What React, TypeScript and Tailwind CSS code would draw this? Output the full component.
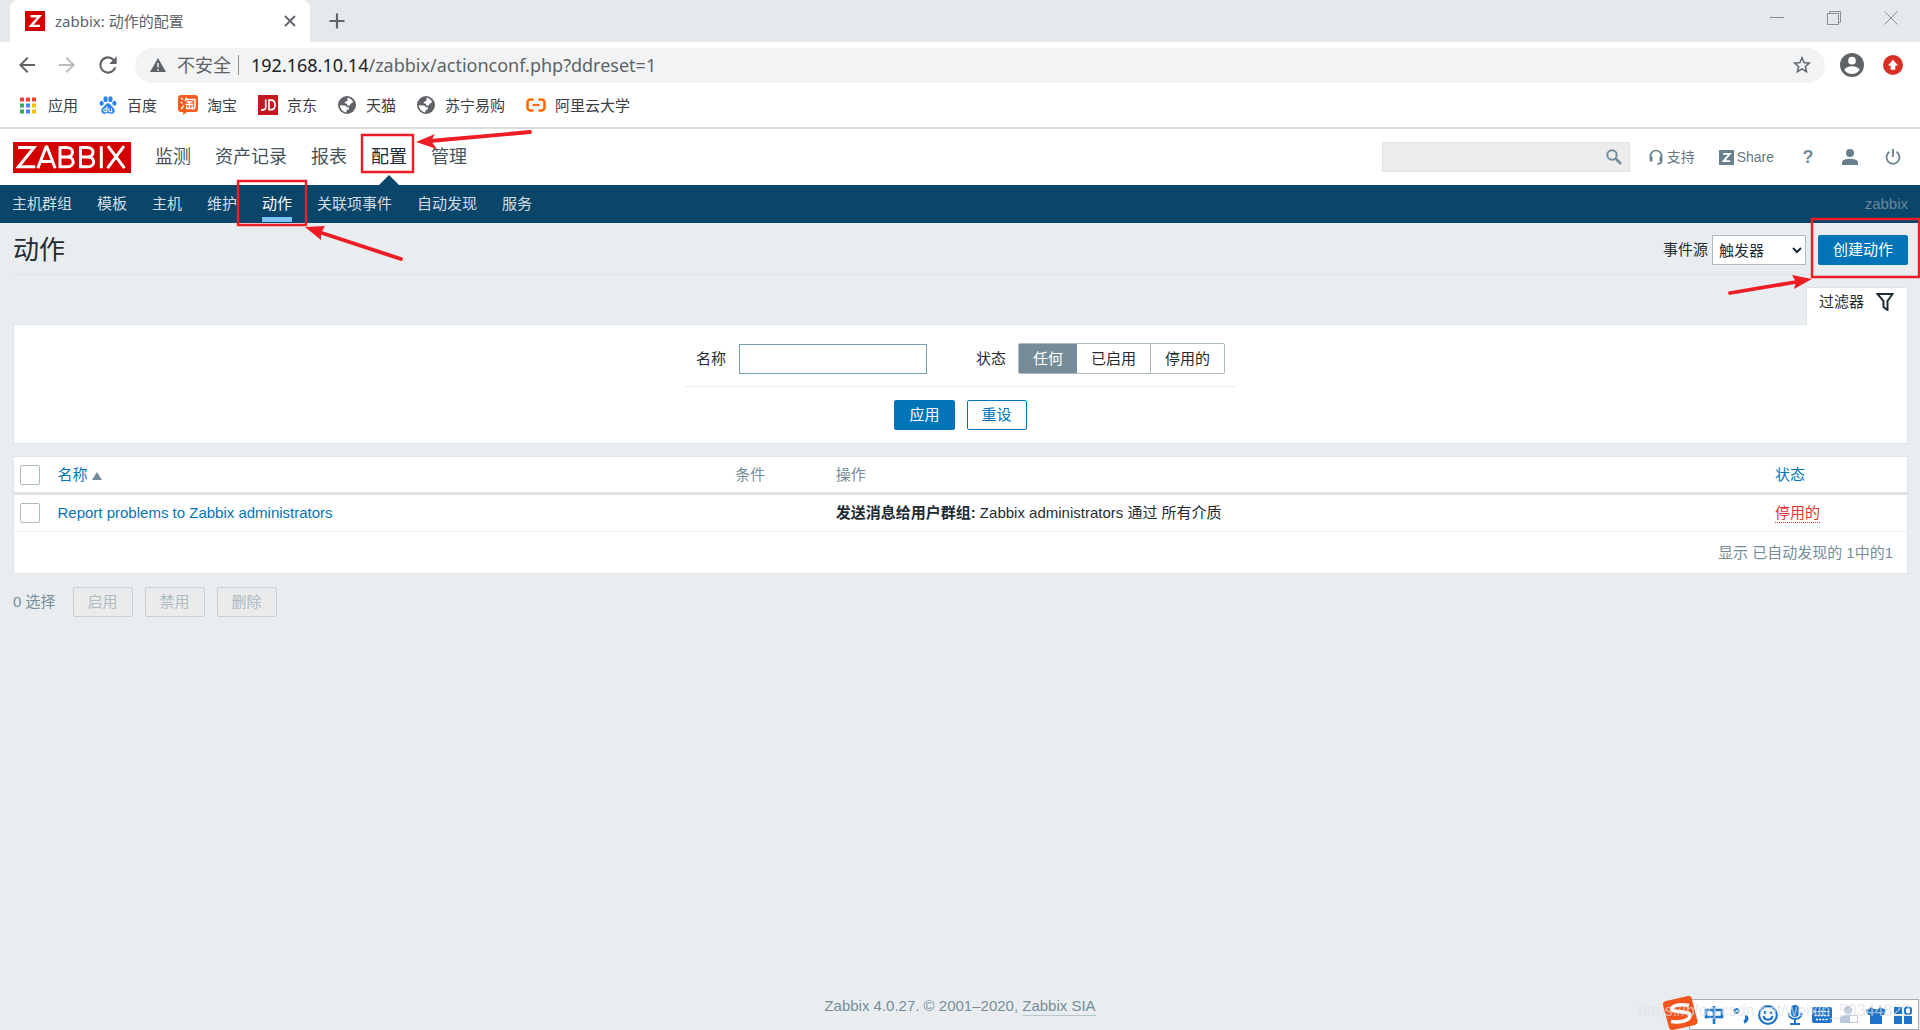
import React from "react";

const ui = "font-['Liberation_Sans','Noto_Sans_CJK_SC',sans-serif]";

function ZTile({ className }: { className: string }) {
  return (
    <svg viewBox="0 0 20 20" className={className} aria-hidden="true">
      <rect width="20" height="20" fill="currentColor" />
      <path d="M5.5 5.2h9L6 14.9h9" fill="none" stroke="#fff" strokeWidth="2.4" />
    </svg>
  );
}

function Globe() {
  return (
    <svg viewBox="0 0 18 18" className="h-[18px] w-[18px] shrink-0" aria-hidden="true">
      <circle cx="9" cy="9" r="9" fill="#5f6368" />
      <path d="M9.500 1.800c2.500.400 4.700 1.900 5.800 4.200l-2.300 1.500-1.500 2.200-2.200-.200-.3-1.700-2.500-.600 1-1.700 2-.5z" fill="#fff" />
      <path d="M1.800 9.200l5.200.300 1.800 1.500 2.200.400-.3 1.900-2 .900-.5 2.200C4.700 15.800 2.200 13 1.800 9.200z" fill="#fff" />
    </svg>
  );
}

function AppsIcon() {
  const colors = ["#ea4335", "#ea4335", "#ea4335", "#34a853", "#4285f4", "#fbbc05", "#34a853", "#4285f4", "#fbbc05"];
  return (
    <svg viewBox="0 0 16 16" className="mr-3 h-[17px] w-4 shrink-0" aria-hidden="true">
      {colors.map((c, i) => (
        <rect key={i} x={(i % 3) * 6} y={Math.floor(i / 3) * 6} width="4" height="4" fill={c} />
      ))}
    </svg>
  );
}

function Baidu() {
  return (
    <svg viewBox="0 0 20 20" className="mr-[10px] h-[18px] w-[18px] shrink-0" fill="#2d84f0" aria-hidden="true">
      <ellipse cx="7.300" cy="3.500" rx="2.300" ry="3.200" />
      <ellipse cx="12.700" cy="3.500" rx="2.300" ry="3.200" />
      <ellipse cx="2.900" cy="8" rx="2.300" ry="2.800" />
      <ellipse cx="17.100" cy="8" rx="2.300" ry="2.800" />
      <path d="M10 8c2 0 2.800 1.800 4.300 3.300 1.700 1.600 3.400 3.100 3.200 5.400-.2 2.300-2.100 3.100-4 2.900-1.500-.2-2.200-.4-3.500-.4s-2 .2-3.500.4c-1.900.2-3.800-.6-4-2.900-.2-2.300 1.500-3.800 3.200-5.400C7.200 9.800 8 8 10 8z" />
      <path d="M8.700 11.500v6H7a1.700 1.700 0 0 1 0-3.400h1.700M11 13.600v2.600c0 .8.500 1.300 1.200 1.300h1.800v-3.900" fill="none" stroke="#fff" strokeWidth="1.200" />
    </svg>
  );
}

function Taobao() {
  return (
    <svg viewBox="0 0 20 20" className="mr-[9px] h-5 w-5 shrink-0" aria-hidden="true">
      <path d="M3 0h14a3 3 0 0 1 3 3v11a3 3 0 0 1-3 3H9l-4 3 .3-3H3a3 3 0 0 1-3-3V3a3 3 0 0 1 3-3z" fill="#ff5b1c" />
      <path d="M3 3.200l2 1.200M2.500 7l2 1.200M3 14c1.700-1 2.300-2.500 2.500-4M8.500 2.500L7 6M8 4.500h9v7.500c0 1.500-.8 2-2.500 2M8.500 7h6M7.500 9.500h8M11.500 7v6.500M8.700 11v2.500h5.600V11" fill="none" stroke="#fff" strokeWidth="1.400" />
    </svg>
  );
}

function Jd() {
  return (
    <svg viewBox="0 0 20 20" className="mr-[9px] h-5 w-5 shrink-0" aria-hidden="true">
      <rect width="20" height="20" fill="#c81623" />
      <path d="M7.700 4.500v8c0 1.800-1.500 2.500-4.700 2.500M11 5.200h2.200c2.500 0 3.800 1.700 3.800 4.700s-1.300 4.700-3.800 4.700H11z" fill="none" stroke="#fff" strokeWidth="1.700" />
    </svg>
  );
}

function Aliyun() {
  return (
    <svg viewBox="0 0 20 20" className="mr-[9px] h-5 w-5 shrink-0" fill="none" stroke="#ff6a00" strokeWidth="2.600" aria-hidden="true">
      <path d="M7.500 4.500H4.500a3 3 0 0 0-3 3v5a3 3 0 0 0 3 3h3M12.500 4.500h3a3 3 0 0 1 3 3v5a3 3 0 0 1-3 3h-3" />
      <path d="M6.500 10h7" strokeWidth="2" />
    </svg>
  );
}

function Browser() {
  return (
    <div className="bg-white font-['Noto_Sans','Noto_Sans_CJK_SC',sans-serif]">
      <div className="flex h-[42px] items-center bg-[#e5e9ec] pl-[10px]">
        <div className="flex h-full w-[300px] items-center rounded-t-lg bg-white pr-[14px] pl-[15px] text-[15px] text-[#5f6368]">
          <ZTile className="mr-[10px] h-5 w-5 text-[#d40000]" />
          <span className="flex-1 whitespace-nowrap">zabbix: 动作的配置</span>
          <button aria-label="关闭标签页" className="flex h-3 w-3 items-center justify-center">
            <svg viewBox="0 0 12 12" className="h-3 w-3" stroke="#5f6368" strokeWidth="1.800"><path d="M1 1l10 10M11 1L1 11" /></svg>
          </button>
        </div>
        <button aria-label="新标签页" className="ml-[19px] h-4 w-4">
          <svg viewBox="0 0 16 16" stroke="#5f6368" strokeWidth="2.200"><path d="M8 .500v15M.500 8h15" /></svg>
        </button>
        <div className="mr-[22px] mb-[6px] ml-auto flex items-center gap-[43px]">
          <button aria-label="最小化" className="h-[14px] w-[14px]"><svg viewBox="0 0 14 14" stroke="#8b8d8f"><path d="M0 6.500h14" /></svg></button>
          <button aria-label="还原" className="h-[14px] w-[14px]"><svg viewBox="0 0 14 14" stroke="#8b8d8f" fill="none"><path d="M.500 2.500h11v11h-11zM2.500 2.500v-2h11v11h-2" /></svg></button>
          <button aria-label="关闭" className="h-[14px] w-[14px]"><svg viewBox="0 0 14 14" stroke="#8b8d8f"><path d="M.500.500l13 13M13.500.500l-13 13" /></svg></button>
        </div>
      </div>

      <div className="flex h-[46px] items-center pr-[17px] pl-[15px]">
        <div className="flex items-center gap-4">
          <button aria-label="后退"><svg viewBox="0 0 24 24" className="h-6 w-6" fill="#5f6368"><path d="M20 11H7.830l5.590-5.590L12 4l-8 8 8 8 1.410-1.410L7.830 13H20v-2z" /></svg></button>
          <button aria-label="前进"><svg viewBox="0 0 24 24" className="h-6 w-6" fill="#babcbe"><path d="M12 4l-1.410 1.410L16.170 11H4v2h12.170l-5.580 5.590L12 20l8-8z" /></svg></button>
          <button aria-label="刷新"><svg viewBox="0 0 24 24" className="h-[26px] w-[26px]" fill="#5f6368"><path d="M17.650 6.350A7.960 7.960 0 0 0 12 4a8 8 0 1 0 7.730 10h-2.080A6 6 0 1 1 12 6c1.660 0 3.140.690 4.220 1.780L13 11h7V4l-2.350 2.350z" /></svg></button>
        </div>
        <div className="ml-[14px] flex h-[35px] min-w-0 flex-1 items-center rounded-full bg-[#f1f3f4] pr-3 pb-px pl-[15px] text-[18px] text-[#5f6368]">
          <svg viewBox="0 0 16 16" className="mr-[11px] h-4 w-4 shrink-0"><path d="M8 1l8 14H0z" fill="#5f6368" /><path d="M8 6v4.500M8 12v1.700" stroke="#f1f3f4" strokeWidth="1.500" /></svg>
          <span className="whitespace-nowrap">不安全</span>
          <span className="mr-3 ml-[7px] h-5 w-px bg-[#8d9093]" />
          <span className="flex-1 whitespace-nowrap"><span className="text-[#202124]">192.168.10.14</span>/zabbix/actionconf.php?ddreset=1</span>
          <button aria-label="收藏"><svg viewBox="0 0 24 24" className="h-[22px] w-[22px]" fill="#5f6368"><path d="M22 9.240l-7.190-.620L12 2 9.190 8.630 2 9.240l5.460 4.730L5.820 21 12 17.270 18.180 21l-1.630-7.030L22 9.240zM12 15.400l-3.760 2.270 1-4.280-3.320-2.880 4.380-.380L12 6.100l1.710 4.040 4.380.380-3.320 2.880 1 4.280L12 15.400z" /></svg></button>
        </div>
        <button aria-label="用户" className="ml-[15px]"><svg viewBox="2 2 20 20" className="h-6 w-6" fill="#5f6368"><path d="M12 2a10 10 0 1 0 0 20 10 10 0 0 0 0-20zm0 3.200a3.200 3.200 0 1 1 0 6.400 3.200 3.200 0 0 1 0-6.400zm0 14.300c-2.600 0-5-1.200-6.300-3.300.1-2.100 4.200-3.200 6.300-3.200s6.200 1.100 6.300 3.200a7.600 7.600 0 0 1-6.300 3.300z" /></svg></button>
        <button aria-label="更新" className="ml-[19px]"><svg viewBox="0 0 20 20" className="h-5 w-5"><circle cx="10" cy="10" r="10" fill="#d93025" /><path d="M10 4.800l5 5.700h-2.700v4.300H7.700v-4.300H5z" fill="#fff" /></svg></button>
      </div>

      <div className="flex h-[39px] items-center gap-[21px] pr-5 pb-[5px] pl-5 text-[15px] whitespace-nowrap text-[#3c4043]">
        <a href="#apps" className="flex items-center"><AppsIcon />应用</a>
        <a href="#baidu" className="flex items-center"><Baidu />百度</a>
        <a href="#taobao" className="flex items-center"><Taobao />淘宝</a>
        <a href="#jd" className="flex items-center"><Jd />京东</a>
        <a href="#tmall" className="flex items-center gap-[10px]"><Globe />天猫</a>
        <a href="#suning" className="flex items-center gap-[10px]"><Globe />苏宁易购</a>
        <a href="#aliyun" className="flex items-center"><Aliyun />阿里云大学</a>
      </div>
      <div className="h-[2px] bg-[#dadce0]" />
    </div>
  );
}

function Header() {
  const top = ["监测", "资产记录", "报表", "配置", "管理"];
  const sub = ["主机群组", "模板", "主机", "维护", "动作", "关联项事件", "自动发现", "服务"];
  return (
    <header>
      <div className="flex h-14 items-center bg-white pr-3 pl-[13px]">
        <a href="#home" aria-label="ZABBIX" className="mr-6 shrink-0">
          <svg viewBox="0 0 118 31" className="h-[31px] w-[118px]" aria-hidden="true">
            <rect width="118" height="31" fill="#d40000" />
            <path d="M5 5.500h16L5.500 24.800h16.800M24.800 26.200L33 5h1l8.200 21.200M27.500 19.500h12M47 5.500h6.500c8 0 8 9.500 0 9.500H47M53.500 15c9 0 9 9.800 0 9.800H47V4.200M67.500 5.500H74c8 0 8 9.500 0 9.500h-6.500M74 15c9 0 9 9.800 0 9.800h-6.500V4.200M88.300 4.200v22M95 4.200l16.500 22M111 4.200l-16.500 22" fill="none" stroke="#fff" strokeWidth="3" />
          </svg>
        </a>
        <nav className="flex h-full gap-6 text-[18px] whitespace-nowrap text-[#45545c]">
          {top.map((t) => (
            <a key={t} href={"#" + t} className={t === "配置" ? "relative flex items-center text-[#1f2c33]" : "flex items-center"}>
              {t}
              {t === "配置" && (
                <svg viewBox="0 0 20 10" className="absolute bottom-0 left-2 h-[10px] w-5"><path d="M0 10L10 0l10 10z" fill="#0a466a" /></svg>
              )}
            </a>
          ))}
        </nav>
        <div className="ml-auto flex items-center text-[14px] text-[#68777f]">
          <form role="search" className="mr-[18px] flex h-[30px] w-[248px] items-center border border-[#dfe4e7] bg-[#ececec] pr-[7px]">
            <input aria-label="搜索" type="text" className="h-full min-w-0 flex-1 bg-transparent px-2 outline-none" />
            <button type="button" aria-label="搜索" className="h-4 w-4"><svg viewBox="0 0 16 16" fill="none" stroke="#768d99"><circle cx="6" cy="6" r="4.700" strokeWidth="2" /><path d="M9.500 9.500l5.500 5.500" strokeWidth="2.600" /></svg></button>
          </form>
          <a href="#support" className="mr-6 flex items-center gap-[3px]">
            <svg viewBox="0 0 16 16" className="h-4 w-4" fill="none" stroke="#68808c" strokeWidth="1.700"><path d="M2.500 10.500V7a5.500 5.500 0 0 1 11 0v5c0 2-1.500 3-4.500 3" /><path d="M3.200 7.500v5M12.800 7.500v5" strokeWidth="2.600" /></svg>
            支持
          </a>
          <a href="#share" className="mr-[25px] flex items-center gap-[3px]"><ZTile className="h-[15px] w-[15px] text-[#68808c]" />Share</a>
          <a href="#help" aria-label="帮助" className="w-[18px] text-center text-[18px] font-bold text-[#768d99]">?</a>
          <a href="#profile" aria-label="用户资料" className="ml-[25px]"><svg viewBox="0 0 16 16" className="h-4 w-4" fill="#68808c"><circle cx="8" cy="4" r="4" /><path d="M0 16v-2.500C0 10.500 5 9.800 8 9.800s8 .7 8 3.700V16z" /></svg></a>
          <a href="#logout" aria-label="登出" className="mr-[7px] ml-[27px]"><svg viewBox="0 0 16 16" className="h-4 w-4" fill="none" stroke="#68808c" strokeWidth="1.800"><path d="M4.500 2.800a6.500 6.500 0 1 0 7 0M8 0v8" /></svg></a>
        </div>
      </div>
      <div className="flex h-[38px] items-stretch bg-[#0a466a] px-3 text-[15px] whitespace-nowrap text-[#d3dee5]">
        <nav className="flex gap-[25px]">
          {sub.map((t) => (
            <a key={t} href={"#" + t} className={t === "动作" ? "relative flex items-center text-white" : "flex items-center"}>
              {t}
              {t === "动作" && <span className="absolute bottom-px left-0 h-[5px] w-full bg-[#7cc4f3]" />}
            </a>
          ))}
        </nav>
        <span className="ml-auto self-center text-[#6c8797]">zabbix</span>
      </div>
    </header>
  );
}

const primary = "h-[30px] rounded-[2px] border border-[#0275b8] bg-[#0275b8] px-[14px] text-white";
const disabled = "h-[30px] w-[60px] rounded-[2px] border border-[#c7d0d5] bg-[#ebebeb] text-[#acbbc2]";
const box = "block h-5 w-5 appearance-none rounded-[2px] border border-[#acbbc2] bg-white";

function Filter() {
  return (
    <section className="mt-3">
      <div className="flex justify-end">
        <button className="relative -mb-px flex h-[38px] items-center gap-3 rounded-t-[2px] border border-b-0 border-[#dfe4e7] bg-white pr-[13px] pb-[10px] pl-3">
          过滤器
          <svg viewBox="0 0 18 18" className="h-[18px] w-[18px]" fill="none" stroke="#1f2c33" strokeWidth="2"><path d="M1.500 1h15l-5 7v9l-4-3V8z" /></svg>
        </button>
      </div>
      <form className="flex flex-col items-center border border-[#dfe4e7] bg-white pt-[18px] pb-[13px]">
        <div className="flex items-center border-b border-[#ebeef0] px-[11px] pb-3">
          <label htmlFor="name" className="mr-[13px]">名称</label>
          <input id="name" type="text" className="h-[30px] w-[188px] border border-[#769fb1] px-2 outline-none" />
          <fieldset className="ml-[49px] flex items-center">
            <legend className="float-left mr-3">状态</legend>
            <div className="flex h-[31px] overflow-hidden rounded-[2px] border border-[#acbbc2]">
              <label className="flex items-center bg-[#768d99] px-[14px] text-white"><input type="radio" name="status" defaultChecked className="sr-only" />任何</label>
              <label className="flex items-center px-[14px]"><input type="radio" name="status" className="sr-only" />已启用</label>
              <label className="flex items-center border-l border-[#acbbc2] px-[14px]"><input type="radio" name="status" className="sr-only" />停用的</label>
            </div>
          </fieldset>
        </div>
        <div className="mt-[13px] flex gap-3">
          <button type="button" className={primary}>应用</button>
          <button type="button" className="h-[30px] rounded-[2px] border border-[#0275b8] bg-white px-[14px] text-[#0275b8]">重设</button>
        </div>
      </form>
    </section>
  );
}

function Actions() {
  return (
    <table className="mt-3 w-full table-fixed border border-[#dfe4e7] bg-white text-left">
      <colgroup>
        <col className="w-10" />
        <col className="w-[36%]" />
        <col className="w-[5.300%]" />
        <col />
        <col className="w-[7%]" />
      </colgroup>
      <thead>
        <tr className="h-[37px] border-b-[3px] border-[#dce2e5] text-[#768d99]">
          <th className="pl-[6px]"><input type="checkbox" aria-label="全选" className={box} /></th>
          <th className="pl-1 font-normal">
            <a href="#sort-name" className="text-[#0275b8]">名称</a>
            <svg viewBox="0 0 10 8" className="ml-1 inline h-2 w-[10px]"><path d="M5 0l5 8H0z" fill="#768d99" /></svg>
          </th>
          <th className="font-normal">条件</th>
          <th className="font-normal">操作</th>
          <th className="font-normal"><a href="#sort-status" className="text-[#0275b8]">状态</a></th>
        </tr>
      </thead>
      <tbody>
        <tr className="h-[38px] border-b border-[#ebeef0]">
          <td className="pl-[6px]"><input type="checkbox" aria-label="Report problems to Zabbix administrators" className={box} /></td>
          <td className="pl-1"><a href="#action" className="text-[#0275b8]">Report problems to Zabbix administrators</a></td>
          <td />
          <td><b>发送消息给用户群组:</b> Zabbix administrators 通过 所有介质</td>
          <td><a href="#enable" className="inline-block border-b border-dotted border-[#e33734] leading-[18px] text-[#e33734]">停用的</a></td>
        </tr>
        <tr className="h-[42px]">
          <td colSpan={5} className="pr-[14px] text-right text-[#768d99]">显示 已自动发现的 1中的1</td>
        </tr>
      </tbody>
    </table>
  );
}

function Ime() {
  return (
    <div className="absolute right-0 bottom-0 h-[34px] w-[282px]">
      <div className="absolute right-px bottom-0 flex h-[31px] w-[230px] items-center justify-end gap-[7px] border border-[#a6abb8] bg-white pr-[5px]">
        <svg viewBox="0 0 20 20" className="h-5 w-5" fill="none" stroke="#1f74c9" strokeWidth="2.600"><path d="M2 5h16v7H2zM10 1v18" /></svg>
        <svg viewBox="0 0 20 20" className="h-5 w-5" fill="none" stroke="#1f74c9" strokeWidth="2"><circle cx="5.500" cy="6" r="2" /><path d="M14 12c3 0 2 4-1 5" strokeWidth="3.500" /></svg>
        <svg viewBox="0 0 20 20" className="h-5 w-5" fill="none" stroke="#1f74c9" strokeWidth="2.200"><circle cx="10" cy="10" r="8.800" /><path d="M5.500 11c1 5 8 5 9 0M7 6v3M13 6v3" /></svg>
        <svg viewBox="0 0 20 20" className="h-5 w-5" fill="#1f74c9"><rect x="6" y="0" width="8" height="12" rx="4" /><path d="M3.500 8c0 8 13 8 13 0M10 14v4M5 19h10" fill="none" stroke="#1f74c9" strokeWidth="2" /></svg>
        <svg viewBox="0 0 20 20" className="h-5 w-5"><rect y="2" width="20" height="16" rx="2" fill="#1f74c9" /><path d="M2.500 6.500h15M2.500 10.500h15M4 14.500h12" stroke="#fff" strokeWidth="1.600" strokeDasharray="2 1.200" /></svg>
        <svg viewBox="0 0 20 20" className="h-5 w-5" fill="#bac6da"><circle cx="9" cy="5" r="4.200" /><path d="M1 18v-5c0-4 16-4 16 0v5z" /><path d="M10.500 10.500h8v7h-8z" fill="#fff" stroke="#bac6da" /></svg>
        <svg viewBox="0 0 20 20" className="h-5 w-5" fill="#1f74c9"><path d="M6 2c1 3 7 3 8 0l6 3-2 5h-2v9H4v-9H2L0 5z" /></svg>
        <svg viewBox="0 0 20 20" className="h-5 w-5" fill="#1f74c9"><path d="M1 2h8v7H1zM1 11h8v8H1zM11 11h8v8h-8z" /><rect x="12" y="2.500" width="6" height="6.500" rx="2" fill="none" stroke="#1f74c9" strokeWidth="2" /></svg>
      </div>
      <svg viewBox="0 0 36 34" className="absolute bottom-0 left-6 h-[34px] w-9">
        <path d="M4 5L26 0q3-.500 3.800 2.500L35.500 25q.5 3-2.500 4L11 34q-3 .500-4-2.500L1 9q-.5-3 3-4z" fill="#f2541b" />
        <path d="M27 9.500C17 7.500 8.500 10 10 13.500c1.500 3.500 18 1 18 6 0 5-10 7.500-19 6" fill="none" stroke="#fff" strokeWidth="3.600" />
      </svg>
      <span className="absolute bottom-[7px] left-0 text-[16px] leading-6 whitespace-nowrap text-[#dde1e4]/70">https://blog.csdn.net/weixin_50344820</span>
    </div>
  );
}

function Marks() {
  return (
    <div className="pointer-events-none absolute inset-x-0 top-0 h-[300px] overflow-hidden">
      <svg viewBox="0 0 560 300" className="absolute top-0 left-0 h-[300px] w-[560px]" fill="none" stroke="#ee1c24" strokeWidth="2.400">
        <path d="M362 135h51v37h-51zM238 181h68v44h-68z" />
        <path d="M530 132L430 141M401 259L322 233" strokeWidth="3.800" strokeLinecap="round" />
        <path d="M416 142L435 134L431 141L437 149zM305 227L325 226L321 233L321 240z" fill="#ee1c24" stroke="none" />
      </svg>
      <svg viewBox="0 0 200 300" className="absolute top-0 right-0 h-[300px] w-[200px]" fill="none" stroke="#ee1c24" strokeWidth="2.400">
        <path d="M92 219h107v58H92z" />
        <path d="M10 293L76 282" strokeWidth="3.800" strokeLinecap="round" />
        <path d="M92 279L72 275L76 282L74 289z" fill="#ee1c24" stroke="none" />
      </svg>
    </div>
  );
}

export default function App() {
  return (
    <div className={`relative flex min-h-screen flex-col bg-[#e9edf0] text-[15px] leading-5 text-[#1f2c33] ${ui}`}>
      <Browser />
      <Header />
      <main className="pr-3 pl-[13px]">
        <div className="flex h-[52px] items-center border-b border-[#dfe4e7] pt-[3px]">
          <h1 className="text-[26px] leading-8">动作</h1>
          <label htmlFor="source" className="mr-1 ml-auto">事件源</label>
          <select id="source" className="mr-3 h-[30px] w-[94px] border border-[#acbbc2] bg-white pl-[2px]"><option>触发器</option></select>
          <button className={primary}>创建动作</button>
        </div>
        <Filter />
        <Actions />
        <div className="mt-[13px] flex items-center text-[#768d99]">
          <span className="mr-[17px]">0 选择</span>
          <div className="flex gap-3">
            <button disabled className={disabled}>启用</button>
            <button disabled className={disabled}>禁用</button>
            <button disabled className={disabled}>删除</button>
          </div>
        </div>
      </main>
      <footer className="mt-auto pb-[14px] text-center text-[#768d99]">
        Zabbix 4.0.27. © 2001–2020, <a href="#sia" className="inline-block border-b border-[#b8c6cc] leading-[18px]">Zabbix SIA</a>
      </footer>
      <Marks />
      <Ime />
    </div>
  );
}
